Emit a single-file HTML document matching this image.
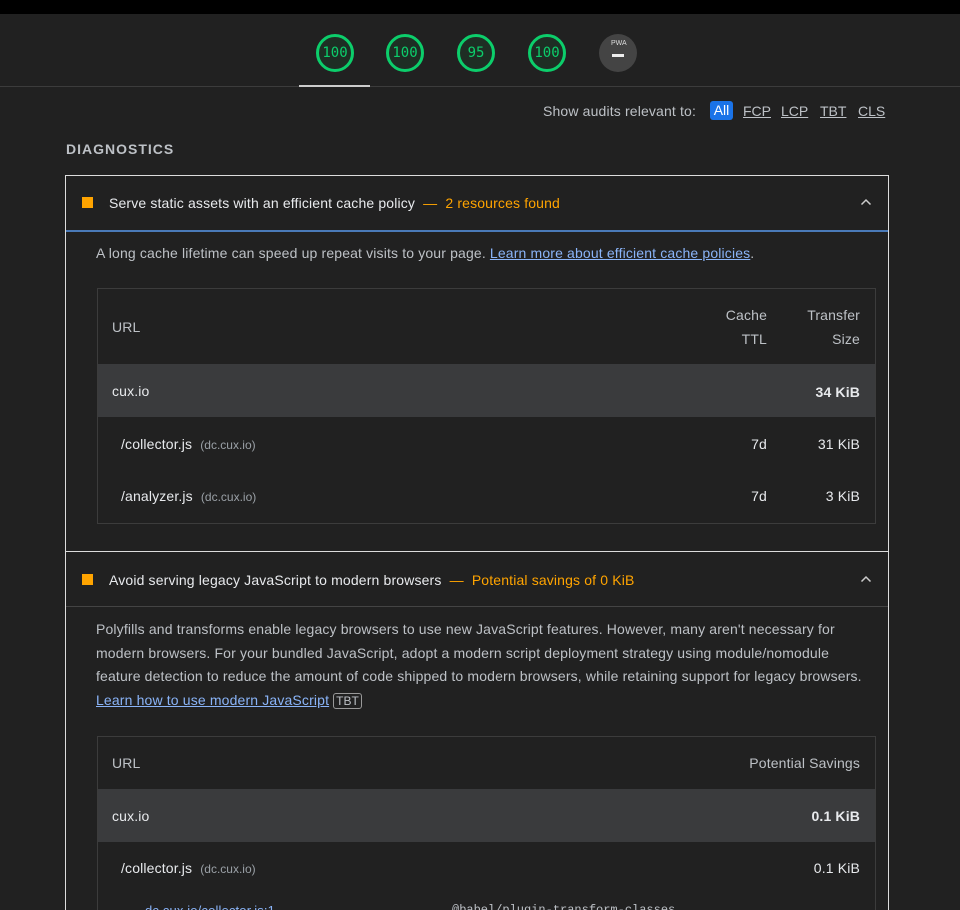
<!DOCTYPE html>
<html><head><meta charset="utf-8"><style>
*{margin:0;padding:0;box-sizing:border-box}
html,body{width:960px;height:910px;overflow:hidden}
body{background:#212121;font-family:"Liberation Sans",sans-serif;color:#e8eaed;position:relative;font-size:14px;letter-spacing:0.15px}
.a{position:absolute;white-space:nowrap}
.g{position:absolute;width:38px;height:38px;border-radius:50%;border:3px solid #0cce6b;background:#1e2e24;color:#0cce6b;font-family:"DejaVu Sans Mono",monospace;font-size:14px;letter-spacing:0;display:flex;align-items:center;justify-content:center;top:34px}
.link{color:#8ab4f8;text-decoration:underline}
.gray{color:#bdc1c6}
.sm{color:#9aa0a6;font-size:12px;letter-spacing:0}
.chev{position:absolute;left:860px;width:12px;height:8px}
</style></head><body>
<div class="a" style="left:0;top:0;width:960px;height:14px;background:#000"></div>
<div class="a" style="left:0;top:86px;width:960px;height:1px;background:#3c3c3c"></div>
<div class="a" style="left:299px;top:85px;width:71px;height:2px;background:#ccc"></div>
<div class="g" style="left:316px">100</div>
<div class="g" style="left:386px">100</div>
<div class="g" style="left:457px">95</div>
<div class="g" style="left:528px">100</div>
<div class="a" style="left:599px;top:34px;width:38px;height:38px;border-radius:50%;background:#444"></div>
<div class="a" style="left:611px;top:40px;font-size:7px;color:#ddd;letter-spacing:0">PWA</div>
<div class="a" style="left:612px;top:54px;width:12px;height:3px;background:#eee"></div>

<div class="a gray" style="left:543px;top:103px">Show audits relevant to:</div>
<div class="a" style="left:710px;top:101px;width:23px;height:19px;background:#1a73e8;border-radius:3px;color:#fff;text-align:center;line-height:19px;letter-spacing:0">All</div>
<div class="a gray" style="left:743px;top:103px;text-decoration:underline;letter-spacing:0">FCP</div>
<div class="a gray" style="left:781px;top:103px;text-decoration:underline;letter-spacing:0">LCP</div>
<div class="a gray" style="left:820px;top:103px;text-decoration:underline;letter-spacing:0">TBT</div>
<div class="a gray" style="left:858px;top:103px;text-decoration:underline;letter-spacing:0">CLS</div>

<div class="a" style="left:66px;top:141px;font-size:14px;font-weight:bold;letter-spacing:1px;color:#bdc1c6">DIAGNOSTICS</div>

<div class="a" style="left:65px;top:175px;width:824px;height:740px;border:1px solid #ddd;border-bottom:none"></div>
<div class="a" style="left:82px;top:197px;width:11px;height:11px;background:#ffa400"></div>
<div class="a" style="left:109px;top:195px">Serve static assets with an efficient cache policy <span style="color:#ffa400">&nbsp;— &nbsp;2 resources found</span></div>
<svg class="chev" style="top:198px" viewBox="0 0 12 8"><path d="M1.5 6.5L6 2l4.5 4.5" fill="none" stroke="#ccc" stroke-width="1.5"/></svg>
<div class="a" style="left:66px;top:230px;width:822px;height:2px;background:#4a7ab8"></div>
<div class="a gray" style="left:96px;top:245px">A long cache lifetime can speed up repeat visits to your page. <span class="link">Learn more about efficient cache policies</span>.</div>

<div class="a" style="left:97px;top:288px;width:779px;height:236px;border:1px solid #3c3c3c"></div>
<div class="a gray" style="left:112px;top:319px">URL</div>
<div class="a gray" style="left:700px;top:303px;width:67px;text-align:right;line-height:24px">Cache<br>TTL</div>
<div class="a gray" style="left:780px;top:303px;width:80px;text-align:right;line-height:24px">Transfer<br>Size</div>
<div class="a" style="left:98px;top:364px;width:777px;height:53px;background:#3a3b3d"></div>
<div class="a" style="left:112px;top:383px">cux.io</div>
<div class="a" style="left:780px;top:384px;width:80px;text-align:right;font-weight:bold">34 KiB</div>
<div class="a" style="left:121px;top:436px">/collector.js &nbsp;<span class="sm">(dc.cux.io)</span></div>
<div class="a" style="left:700px;top:436px;width:67px;text-align:right">7d</div>
<div class="a" style="left:780px;top:436px;width:80px;text-align:right">31 KiB</div>
<div class="a" style="left:121px;top:488px">/analyzer.js &nbsp;<span class="sm">(dc.cux.io)</span></div>
<div class="a" style="left:700px;top:488px;width:67px;text-align:right">7d</div>
<div class="a" style="left:780px;top:488px;width:80px;text-align:right">3 KiB</div>

<div class="a" style="left:66px;top:551px;width:822px;height:1px;background:#ddd"></div>
<div class="a" style="left:82px;top:574px;width:11px;height:11px;background:#ffa400"></div>
<div class="a" style="left:109px;top:572px">Avoid serving legacy JavaScript to modern browsers <span style="color:#ffa400">&nbsp;— &nbsp;Potential savings of 0 KiB</span></div>
<svg class="chev" style="top:575px" viewBox="0 0 12 8"><path d="M1.5 6.5L6 2l4.5 4.5" fill="none" stroke="#ccc" stroke-width="1.5"/></svg>
<div class="a" style="left:66px;top:606px;width:822px;height:1px;background:#444"></div>
<div class="a gray" style="left:96px;top:618px;line-height:23.5px">Polyfills and transforms enable legacy browsers to use new JavaScript features. However, many aren't necessary for<br>modern browsers. For your bundled JavaScript, adopt a modern script deployment strategy using module/nomodule<br>feature detection to reduce the amount of code shipped to modern browsers, while retaining support for legacy browsers.<br><span class="link">Learn how to use modern JavaScript</span> <span style="border:1px solid #999;border-radius:3px;font-size:12px;padding:0 2px;letter-spacing:0">TBT</span></div>

<div class="a" style="left:97px;top:736px;width:779px;height:200px;border:1px solid #3c3c3c"></div>
<div class="a gray" style="left:112px;top:755px">URL</div>
<div class="a gray" style="left:700px;top:755px;width:160px;text-align:right">Potential Savings</div>
<div class="a" style="left:98px;top:789px;width:777px;height:53px;background:#3a3b3d"></div>
<div class="a" style="left:112px;top:808px">cux.io</div>
<div class="a" style="left:760px;top:808px;width:100px;text-align:right;font-weight:bold">0.1 KiB</div>
<div class="a" style="left:121px;top:860px">/collector.js &nbsp;<span class="sm">(dc.cux.io)</span></div>
<div class="a" style="left:760px;top:860px;width:100px;text-align:right">0.1 KiB</div>
<div class="a link" style="left:145px;top:903px;font-size:13px">dc.cux.io/collector.js:1</div>
<div class="a" style="left:452px;top:903px;font-family:'Liberation Mono',monospace;font-size:12px;color:#bdc1c6;letter-spacing:0">@babel/plugin-transform-classes</div>
</body></html>
